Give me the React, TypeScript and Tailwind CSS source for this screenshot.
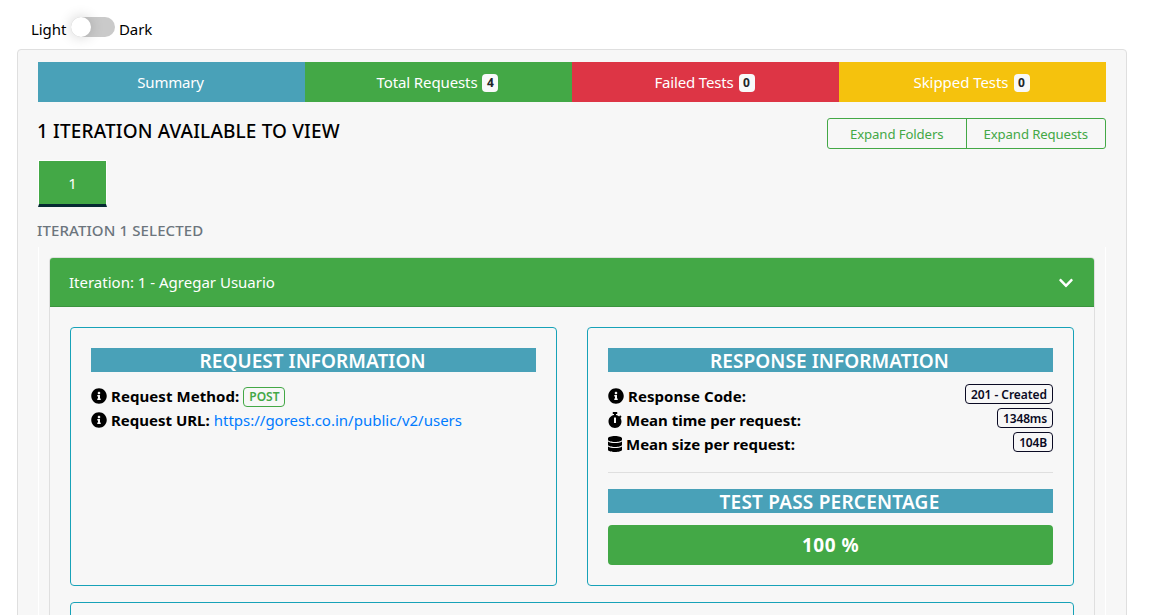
import type { ReactNode } from "react";
import { FaChevronDown, FaDatabase, FaInfoCircle, FaStopwatch } from "react-icons/fa";

const tabs = [
  { label: "Summary", bg: "bg-[#49a1b8]", tracking: "tracking-[-0.19px]" },
  { label: "Total Requests", count: 4, bg: "bg-[#43a846]", tracking: "tracking-[-0.11px]" },
  { label: "Failed Tests", count: 0, bg: "bg-[#dd3545]", tracking: "tracking-[-0.17px]" },
  { label: "Skipped Tests", count: 0, bg: "bg-[#f5c20d]", tracking: "tracking-[-0.05px]" },
];

function ThemeSwitch() {
  return (
    <div className="flex h-[49px] items-start pl-[31px]">
      <span className="mt-[17px] w-10 tracking-[-0.08px]">Light</span>
      <span className="mt-[17px] flex h-5 w-11 rounded-full bg-[#cacaca]">
        <span className="size-5 rounded-full bg-white shadow-[0_0_14px_rgba(0,0,0,0.2)]" />
      </span>
      <span className="mt-[17px] ml-1 tracking-[-0.1px]">Dark</span>
    </div>
  );
}

function TabBar() {
  return (
    <nav className="grid h-10 grid-cols-4 text-white">
      {tabs.map((tab) => (
        <div key={tab.label} className={`flex items-center justify-center pr-[2px] pb-px ${tab.bg}`}>
          <span className={tab.tracking}>{tab.label}</span>
          {tab.count !== undefined && (
            <span className="mt-[3px] ml-[5px] flex h-[18px] w-4 items-center justify-center rounded bg-[#f8f9fa] text-[12px] font-bold text-[#212529]">
              {tab.count}
            </span>
          )}
        </div>
      ))}
    </nav>
  );
}

function Panel({ children }: { children?: ReactNode }) {
  return <section className="h-[259px] rounded border border-[#17a2b8] p-5">{children}</section>;
}

function Banner({ children }: { children: ReactNode }) {
  return (
    <h5 className="flex h-6 items-center justify-center bg-[#49a1b8] pt-px pr-[2px] text-[19px] leading-6 font-semibold text-white">
      {children}
    </h5>
  );
}

function Row({ icon, label, children, tracking = "" }: { icon: ReactNode; label: string; children?: ReactNode; tracking?: string }) {
  return (
    <div className="flex h-6 items-center">
      {icon}
      <strong className={`ml-1 font-bold ${tracking}`}>{label}</strong>
      {children}
    </div>
  );
}

function ValueBadge({ children, width }: { children: ReactNode; width: string }) {
  return (
    <span className={`mb-1 ml-auto flex h-5 items-center justify-center rounded border border-[#0a0a23] pt-px text-[12px] font-semibold text-[#0a0a23] ${width}`}>
      {children}
    </span>
  );
}

export default function App() {
  return (
    <div className="h-[615px] overflow-hidden bg-white font-['Noto_Sans','Liberation_Sans',sans-serif] text-[15px] leading-6 whitespace-nowrap text-black">
      <ThemeSwitch />
      <main className="ml-[17px] h-[640px] w-[1110px] rounded border border-[#dfdfdf] bg-[#f7f7f7] px-5 pt-3">
        <TabBar />
        <div className="flex h-[58px] items-start justify-between">
          <h5 className="mt-[17px] -ml-px text-[19px] font-medium tracking-[0.15px]">1 ITERATION AVAILABLE TO VIEW</h5>
          <div className="mt-4 grid h-[31px] w-[279px] grid-cols-2 rounded-[3px] border border-[#43a846] text-[13.2px] text-[#43a846]">
            <button className="border-r border-[#43a846] tracking-[-0.11px]">Expand Folders</button>
            <button className="tracking-[-0.12px]">Expand Requests</button>
          </div>
        </div>
        <div className="h-[47px] w-[69px] border border-b-[3px] border-white border-b-[#062a33] bg-[#43a846] pt-[10px] text-center text-white">
          1
        </div>
        <h6 className="mt-[11px] -ml-px h-[29px] font-medium tracking-[0.11px] text-[#6c757d]">ITERATION 1 SELECTED</h6>

        <div className="h-[400px] border-x border-white px-[10px] pt-[10px]">
          <div className="h-[400px] rounded border border-[#dfdfdf]">
            <header className="flex h-[49px] items-center justify-between rounded-t-[3px] border-b border-[#3b943e] bg-[#43a846] pr-5 pl-[19px] text-white">
              <span>Iteration: 1 - Agregar Usuario</span>
              <FaChevronDown size={16} className="mt-[2px]" />
            </header>
            <div className="grid grid-cols-[487px_487px] gap-[30px] px-5 pt-5">
              <Panel>
                <Banner><span className="tracking-[0.04px]">REQUEST INFORMATION</span></Banner>
                <div className="pt-3">
                  <Row icon={<FaInfoCircle size={16} />} label="Request Method:" tracking="tracking-[0.07px]">
                    <span className="mt-[2px] ml-1 flex h-5 w-[42px] items-center justify-center rounded border border-[#43a846] text-[12px] font-semibold text-[#43a846]">
                      POST
                    </span>
                  </Row>
                  <Row icon={<FaInfoCircle size={16} />} label="Request URL:">
                    <a className="ml-1 text-[#007bff]">https://gorest.co.in/public/v2/users</a>
                  </Row>
                </div>
              </Panel>
              <Panel>
                <Banner><span className="tracking-[0.08px]">RESPONSE INFORMATION</span></Banner>
                <div className="pt-3">
                  <Row icon={<FaInfoCircle size={16} />} label="Response Code:" tracking="tracking-[0.07px]">
                    <ValueBadge width="w-[88px]"><span className="tracking-[-0.05px]">201 - Created</span></ValueBadge>
                  </Row>
                  <Row icon={<FaStopwatch size={16} className="-mr-px -ml-px" />} label="Mean time per request:">
                    <ValueBadge width="w-14"><span className="tracking-[-0.15px]">1348ms</span></ValueBadge>
                  </Row>
                  <Row icon={<FaDatabase size={16} className="-mr-px -ml-px" />} label="Mean size per request:">
                    <ValueBadge width="w-10"><span className="tracking-[-0.2px]">104B</span></ValueBadge>
                  </Row>
                </div>
                <hr className="mt-4 mb-4 border-[#dfdfdf]" />
                <Banner><span className="tracking-[0.22px]">TEST PASS PERCENTAGE</span></Banner>
                <div className="mt-3 flex h-10 items-center justify-center rounded bg-[#43a846] text-[19px] font-bold tracking-[0.46px] text-white">
                  100 %
                </div>
              </Panel>
            </div>
            <div className="px-5 pt-4">
              <Panel />
            </div>
          </div>
        </div>
      </main>
    </div>
  );
}
